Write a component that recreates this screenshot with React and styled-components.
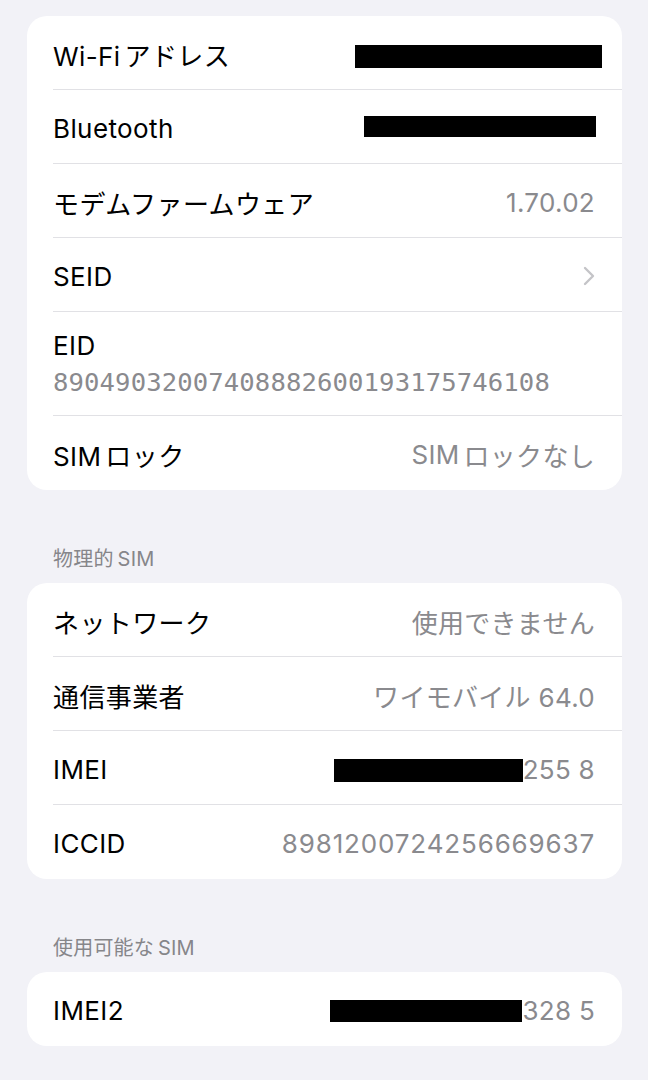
import styled, { createGlobalStyle } from "styled-components"

const GlobalStyle = createGlobalStyle`
html, body {
margin:0;
padding:0;
background:#f2f2f7;
}
body {
font-family:Inter, "Noto Sans CJK JP", sans-serif;
-webkit-font-smoothing:antialiased;
}
`

// grouped settings list, iOS style
const Page = styled.div`
width:648px;
min-height:1080px;
box-sizing:border-box;
padding:16px 26px 0 27px;
background:#f2f2f7;
`
const Card = styled.div`
background:#ffffff;
border-radius:20px;
overflow:hidden;
`
const Row = styled.div`
display:flex;
align-items:center;
justify-content:space-between;
height:${p => (p.$tall ? 104 : 74)}px;
margin-left:26px;
padding-right:27px;
padding-top:${p => (p.$tall ? 0 : 3)}px;
box-sizing:border-box;
border-bottom:${p => (p.$last ? "none" : "1px solid #e1e1e5")};
`
const Stack = styled.div`
display:flex;
flex-direction:column;
justify-content:center;
gap:6px;
`
const Label = styled.span`
font-size:26px;
color:#000000;
letter-spacing:0.4px;
white-space:nowrap;
`
const Value = styled.span`
display:flex;
align-items:center;
font-size:26px;
color:#8a8a8e;
letter-spacing:${p => p.$spacing || "0.3px"};
white-space:nowrap;
`
const MonoValue = styled.span`
font-family:"DejaVu Sans Mono", monospace;
font-size:25.6px;
color:#8a8a8e;
letter-spacing:0.12px;
`
// the small gap iOS puts between latin and kana
const Latin = styled.span`
margin-right:${p => p.$after ? 4 : 0}px;
margin-left:${p => p.$before ? 4 : 0}px;
`
const Redact = styled.span`
display:inline-block;
width:${p => p.$w}px;
height:${p => p.$h || 23}px;
background:#000000;
margin-top:${p => p.$dy || 0}px;
margin-right:${p => p.$mr || 0}px;
`
const SectionHeader = styled.div`
padding:56px 26px 11px;
font-size:20px;
line-height:26px;
color:#86868a;
letter-spacing:0.2px;
`
const Chevron = () => (
    <svg width="12" height="20" viewBox="0 0 12 20">
        <polyline points="2,2 10,10 2,18" fill="none" stroke="#c4c4c8" strokeWidth="2.4" strokeLinecap="round" strokeLinejoin="round" />
    </svg>
)

export default function App() {
    return (
        <Page>
            <GlobalStyle />
            <Card>
                <Row>
                    <Label><Latin $after>Wi-Fi</Latin>アドレス</Label>
                    <Redact $w={247} $dy={4} $mr={-7} />
                </Row>
                <Row>
                    <Label>Bluetooth</Label>
                    <Redact $w={232} $h={21} $dy={-3} $mr={-1} />
                </Row>
                <Row>
                    <Label>モデムファームウェア</Label>
                    <Value>1.70.02</Value>
                </Row>
                <Row>
                    <Label>SEID</Label>
                    <Chevron />
                </Row>
                <Row $tall>
                    <Stack>
                        <Label>EID</Label>
                        <MonoValue>89049032007408882600193175746108</MonoValue>
                    </Stack>
                </Row>
                <Row $last>
                    <Label><Latin $after>SIM</Latin>ロック</Label>
                    <Value><Latin $after>SIM</Latin>ロックなし</Value>
                </Row>
            </Card>

            <SectionHeader>物理的<Latin $before>SIM</Latin></SectionHeader>
            <Card>
                <Row>
                    <Label>ネットワーク</Label>
                    <Value>使用できません</Value>
                </Row>
                <Row>
                    <Label>通信事業者</Label>
                    <Value>ワイモバイル 64.0</Value>
                </Row>
                <Row>
                    <Label>IMEI</Label>
                    <Value><Redact $w={189} $dy={2} />255 8</Value>
                </Row>
                <Row $last>
                    <Label>ICCID</Label>
                    <Value $spacing="0.85px">8981200724256669637</Value>
                </Row>
            </Card>

            <SectionHeader>使用可能な<Latin $before>SIM</Latin></SectionHeader>
            <Card>
                <Row $last>
                    <Label>IMEI2</Label>
                    <Value><Redact $w={192} $h={22} />328 5</Value>
                </Row>
            </Card>
        </Page>
    )
}
